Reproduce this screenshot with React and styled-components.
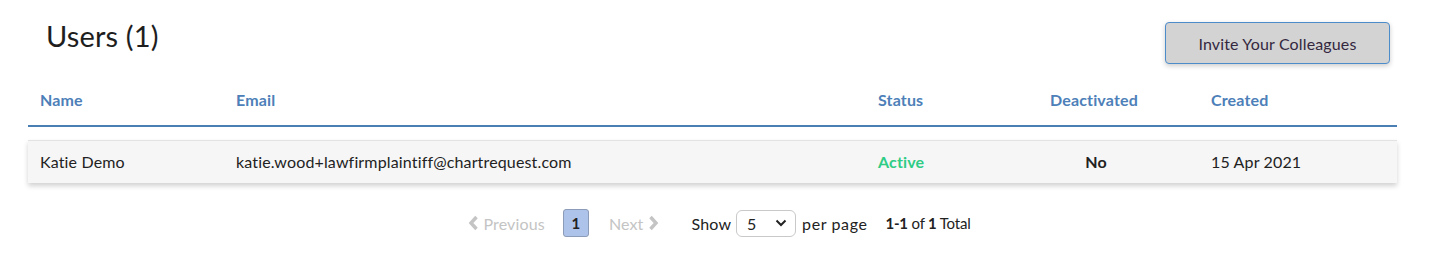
import React from 'react';
import styled, { createGlobalStyle } from 'styled-components';

const GlobalStyle = createGlobalStyle`
    body {
        margin: 0;
        background: #fff;
        font-family: Lato, 'Open Sans', sans-serif;
        color: #222;
        letter-spacing: 0.15px;
    }
`

const Page = styled.div`
    padding: 14px 40px 0 28px;
`

const TopBar = styled.div`
    display: flex;
    justify-content: space-between;
    align-items: flex-start;
`

const Title = styled.h1`
    margin: 4px 0 0 18px;
    font-size: 29px;
    font-weight: 400;
    color: #1e1e1e;
`

const InviteButton = styled.button`
    margin: 8px 7px 0 0;
    width: 225px;
    height: 42px;
    background: #d3d3d3;
    border: 1px solid #4d8ccb;
    border-radius: 4px;
    box-shadow: 0 2px 5px rgba(0, 0, 0, 0.2);
    font-family: inherit;
    letter-spacing: inherit;
    font-size: 16px;
    color: #34283f;
`

const columns = '196px 642px 172px 161px 1fr'

const HeaderRow = styled.div`
    display: grid;
    grid-template-columns: ${columns};
    margin-top: 10px;
    height: 51px;
    align-items: center;
    border-bottom: 2px solid #4a7fb3;
`

const HeaderCell = styled.div`
    padding-left: 12px;
    font-size: 16px;
    font-weight: 700;
    color: #4d80b8;
`

const Row = styled.div`
    display: grid;
    grid-template-columns: ${columns};
    margin-top: 13px;
    height: 42px;
    align-items: center;
    background: #f6f6f6;
    border-top: 1px solid #e3e3e3;
    box-shadow: 0 3px 5px rgba(0, 0, 0, 0.18);
`

const Cell = styled.div`
    padding-left: 12px;
    padding-bottom: 2px;
    font-size: 16px;
    color: ${p => p.$color || '#222'};
    font-weight: ${p => (p.$bold ? 700 : 400)};
`

const Centered = styled.span`
    display: inline-block;
    width: 92px;
    text-align: center;
`

const Pager = styled.div`
    display: flex;
    justify-content: center;
    align-items: center;
    margin-top: 26px;
    padding-left: 14px;
    font-size: 16px;
    color: #222;
`

const PageLink = styled.span`
    display: flex;
    align-items: center;
    gap: 4px;
    color: #c4c4c4;
`

const PageNumber = styled.span`
    margin: 0 20px 0 18px;
    width: 24px;
    height: 26px;
    display: flex;
    align-items: center;
    justify-content: center;
    background: #aec3e9;
    border: 1px solid #8c9bb7;
    border-radius: 3px;
    font-weight: 700;
    font-size: 15px;
    color: #222;
`

const ShowLabel = styled.span`
    margin-left: 33px;
`

const Select = styled.div`
    margin: 0 6px 0 5px;
    width: 60px;
    height: 27px;
    box-sizing: border-box;
    border: 1px solid #c9c9c9;
    border-radius: 6px;
    display: flex;
    align-items: center;
    justify-content: space-between;
    padding: 0 8px 0 10px;
`

const PerPage = styled.span`
    letter-spacing: 0.6px;
`

const Total = styled.span`
    margin-left: 18px;
    font-size: 15px;
    letter-spacing: -0.2px;
    & b {
        font-weight: 700;
    }
`

const Chevron = ({ dir }) => (
    <svg width="11" height="16" viewBox="0 0 11 16">
        <path
            d={dir === 'left' ? 'M8.5 2 L3 8 L8.5 14' : 'M2.5 2 L8 8 L2.5 14'}
            fill="none"
            stroke="#c4c4c4"
            strokeWidth="3.4"
        />
    </svg>
)

export default function App() {
    return (
        <>
            <GlobalStyle />
            <Page>
                <TopBar>
                    <Title>Users (1)</Title>
                    <InviteButton>Invite Your Colleagues</InviteButton>
                </TopBar>
                <HeaderRow>
                    <HeaderCell>Name</HeaderCell>
                    <HeaderCell>Email</HeaderCell>
                    <HeaderCell>Status</HeaderCell>
                    <HeaderCell>Deactivated</HeaderCell>
                    <HeaderCell>Created</HeaderCell>
                </HeaderRow>
                <Row>
                    <Cell>Katie Demo</Cell>
                    <Cell>katie.wood+lawfirmplaintiff@chartrequest.com</Cell>
                    <Cell $color="#2ecc85" $bold>Active</Cell>
                    <Cell $bold><Centered>No</Centered></Cell>
                    <Cell>15 Apr 2021</Cell>
                </Row>
                <Pager>
                    <PageLink><Chevron dir="left" />Previous</PageLink>
                    <PageNumber>1</PageNumber>
                    <PageLink>Next<Chevron dir="right" /></PageLink>
                    <ShowLabel>Show</ShowLabel>
                    <Select>
                        <span>5</span>
                        <svg width="12" height="8" viewBox="0 0 12 8">
                            <path d="M1.5 1.5 L6 6 L10.5 1.5" fill="none" stroke="#222" strokeWidth="2" />
                        </svg>
                    </Select>
                    <PerPage>per page</PerPage>
                    <Total><b>1-1</b> of <b>1</b> Total</Total>
                </Pager>
            </Page>
        </>
    )
}
